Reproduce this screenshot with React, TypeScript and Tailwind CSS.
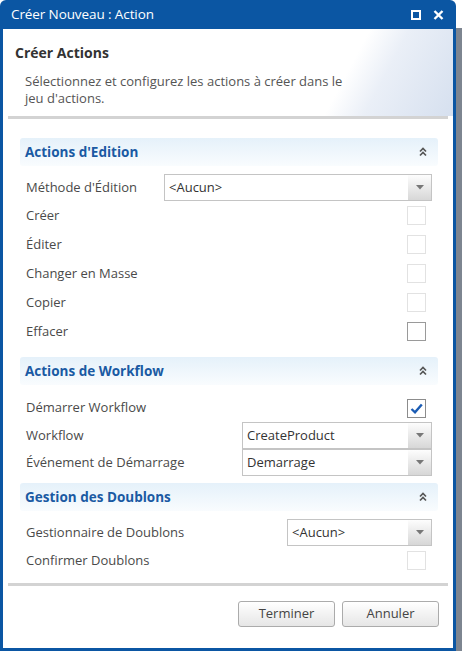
import React from 'react';

type Field =
  | { kind: 'check'; label: string; checked?: boolean; strong?: boolean; h?: string }
  | { kind: 'select'; label: string; value: string; left: string };

type Section = { title: string; fields: Field[]; gap: string };

const sections: Section[] = [
  {
    title: "Actions d'Edition",
    gap: 'pt-[8px] pb-[11px]',
    fields: [
      { kind: 'select', label: "Méthode d'Édition", value: '<Aucun>', left: 'w-[268px]' },
      { kind: 'check', label: 'Créer' },
      { kind: 'check', label: 'Éditer' },
      { kind: 'check', label: 'Changer en Masse' },
      { kind: 'check', label: 'Copier' },
      { kind: 'check', label: 'Effacer', strong: true },
    ],
  },
  {
    title: 'Actions de Workflow',
    gap: 'pt-[9px] pb-[7px]',
    fields: [
      { kind: 'check', label: 'Démarrer Workflow', checked: true, h: 'h-[28px]' },
      { kind: 'select', label: 'Workflow', value: 'CreateProduct', left: 'w-[190px]' },
      { kind: 'select', label: 'Événement de Démarrage', value: 'Demarrage', left: 'w-[190px]' },
    ],
  },
  {
    title: 'Gestion des Doublons',
    gap: 'pt-[8px] pb-[8px]',
    fields: [
      { kind: 'select', label: 'Gestionnaire de Doublons', value: '<Aucun>', left: 'w-[145px]' },
      { kind: 'check', label: 'Confirmer Doublons' },
    ],
  },
];

function Chevrons() {
  return (
    <svg width="8" height="10" viewBox="0 0 8 10" fill="none" stroke="#555" strokeWidth="1.7">
      <path d="M1 4.5 L4 1.5 L7 4.5" />
      <path d="M1 8.5 L4 5.5 L7 8.5" />
    </svg>
  );
}

function Checkbox({ checked, strong }: { checked?: boolean; strong?: boolean }) {
  const border = checked ? 'border-[#8c8c8c]' : strong ? 'border-[#9a9a9a]' : 'border-[#e2e2e2]';
  return (
    <div className={`mr-[6px] flex h-[19px] w-[19px] items-center justify-center border bg-white ${border}`}>
      {checked ? (
        <svg width="13" height="11" viewBox="0 0 13 11" fill="none">
          <path d="M1.5 6 L5 9.3 L11.8 1.5" stroke="#1b5cb4" strokeWidth="2.4" />
        </svg>
      ) : null}
    </div>
  );
}

function Select({ value, width }: { value: string; width: string }) {
  return (
    <div className={`flex h-[27px] ${width} items-stretch border border-[#c4c4c4] bg-white`}>
      <div className="flex flex-1 items-center pl-[4px] text-[#333]">{value}</div>
      <div className="flex w-[23px] items-center justify-center bg-gradient-to-b from-[#fdfdfd] to-[#d7d7d7]">
        <svg width="8" height="5" viewBox="0 0 8 5">
          <path d="M0 0 H8 L4 4.5 Z" fill="#777" />
        </svg>
      </div>
    </div>
  );
}

function Row({ field }: { field: Field }) {
  if (field.kind === 'select') {
    return (
      <div className="flex h-[27px] items-center justify-between pr-[6px]">
        <span className="pl-[6px]">{field.label}</span>
        <Select value={field.value} width={field.left} />
      </div>
    );
  }
  return (
    <div className={`flex ${field.h ?? 'h-[29px]'} items-center justify-between pr-[6px]`}>
      <span className="pl-[6px]">{field.label}</span>
      <Checkbox checked={field.checked} strong={field.strong} />
    </div>
  );
}

export default function App() {
  return (
    <div className="flex h-[651px] w-[462px] bg-white font-['Open_Sans','Noto_Sans',sans-serif]">
      <div className="flex h-[651px] w-[456px] flex-col rounded-t-[6px] bg-[#0b56a3] px-[3px] pb-[3px]">
        <div className="flex h-[29px] shrink-0 items-center justify-between pl-[8px] pr-[9px] text-white">
          <span className="text-[13.5px] tracking-[-0.1px]">Créer Nouveau : Action</span>
          <div className="flex items-center gap-[12px]">
            <svg width="10" height="10" viewBox="0 0 10 10" fill="none">
              <rect x="1" y="1" width="8" height="8" stroke="white" strokeWidth="2" />
            </svg>
            <svg width="11" height="10" viewBox="0 0 11 10" fill="none">
              <path d="M1.5 1 L9.5 9 M9.5 1 L1.5 9" stroke="white" strokeWidth="2.4" />
            </svg>
          </div>
        </div>

        <div className="flex flex-1 flex-col bg-white text-[13px] text-[#4a4a4a]">
          <div className="h-[87px] shrink-0 bg-[linear-gradient(118deg,#ffffff_74%,#eaeff7_82%,#d6e0ef_100%)] px-[12px] pt-[15px]">
            <div className="text-[14px] font-bold leading-[18px] text-[#333]">Créer Actions</div>
            <div className="mt-[11px] pl-[10px] leading-[17px] text-[#555]">
              <div>Sélectionnez et configurez les actions à créer dans le</div>
              <div>jeu d'actions.</div>
            </div>
          </div>
          <div className="mx-[5px] h-[3px] bg-[#d3d3d3]" />

          <div className="flex flex-col pl-[17px] pr-[15px] pt-[19px]">
            {sections.map((section) => (
              <div key={section.title} className="flex flex-col">
                <div className="flex h-[28px] items-center justify-between rounded-[3px] bg-gradient-to-b from-[#e5f1fa] to-[#f9fcfe] pl-[5px] pr-[11px]">
                  <span className="text-[13.5px] font-bold text-[#1a5aa3]">{section.title}</span>
                  <Chevrons />
                </div>
                <div className={`flex flex-col ${section.gap}`}>
                  {section.fields.map((field) => (
                    <Row key={field.label} field={field} />
                  ))}
                </div>
              </div>
            ))}
          </div>

          <div className="mx-[5px] h-[3px] bg-[#d3d3d3]" />
          <div className="flex justify-end gap-[7px] pr-[14px] pt-[15px]">
            {['Terminer', 'Annuler'].map((label) => (
              <button
                key={label}
                className="flex h-[26px] w-[97px] items-center justify-center rounded-[3px] border border-[#ababab] bg-gradient-to-b from-[#ffffff] to-[#e6e6e6] text-[13px] text-[#444]"
              >
                {label}
              </button>
            ))}
          </div>
        </div>
      </div>
      <div className="mt-[28px] w-[6px] bg-[#7d8590]" />
    </div>
  );
}
